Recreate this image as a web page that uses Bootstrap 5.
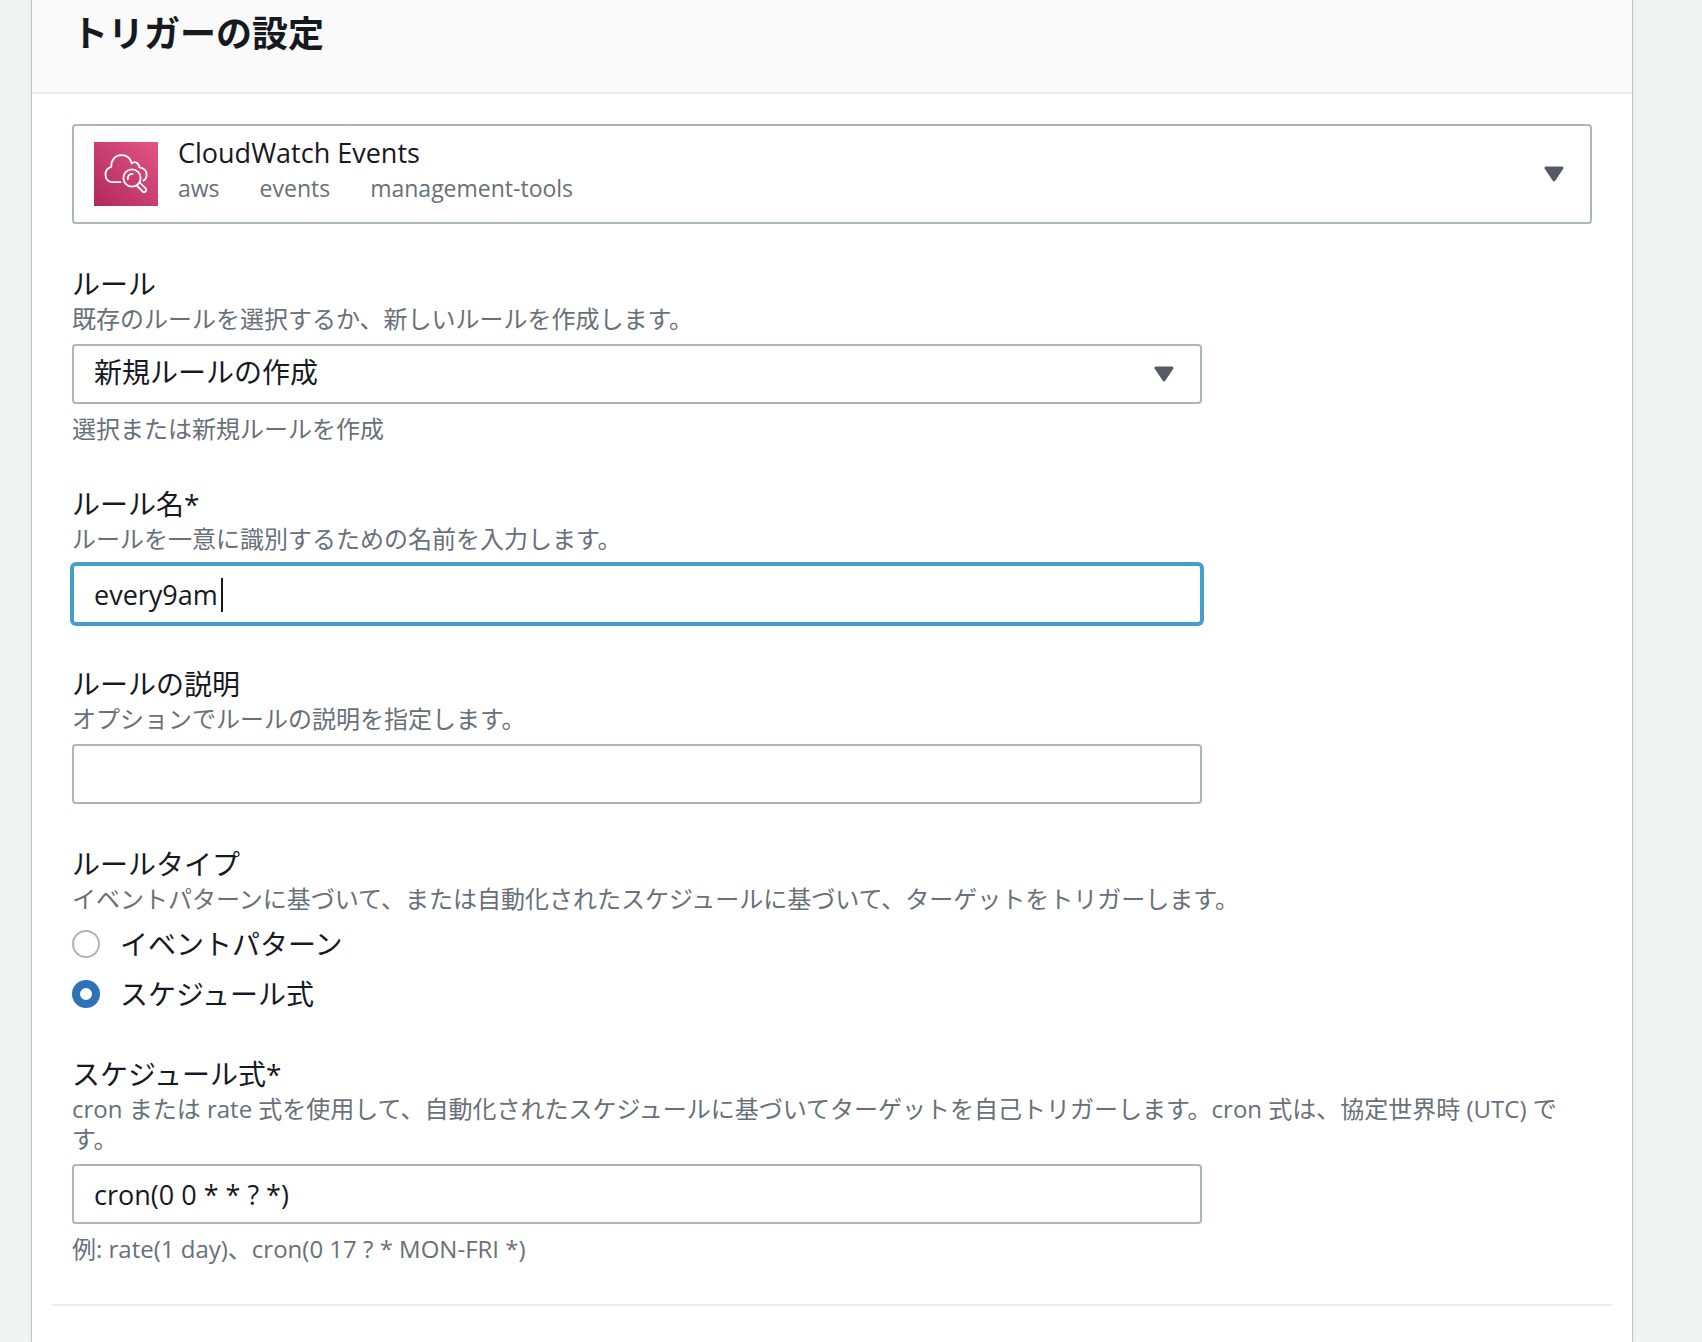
<!DOCTYPE html>
<html lang="ja">
<head>
<meta charset="utf-8">
<meta name="viewport" content="width=device-width, initial-scale=1">
<title>トリガーの設定</title>
<link href="https://cdn.jsdelivr.net/npm/bootstrap@5.3.0/dist/css/bootstrap.min.css" rel="stylesheet">
<style>
  body {
    background: #f2f4f4;
    color: #16191f;
    font-family: "Open Sans", "Noto Sans CJK JP", sans-serif;
    font-size: 28px;
    line-height: 40px;
  }
  .page-gutter { padding: 0 70px 0 32px; }
  .trigger-panel {
    border: 0;
    border-radius: 0;
    color: inherit;
    box-shadow: 0 0 0 1px #c3c8cb, 0 0 3px 1px #d5d9db;
  }
  .trigger-header {
    background: #fafafa;
    border-bottom: 2px solid #eaeded;
    border-radius: 0 !important;
    padding: 12px 40px 36px;
  }
  .trigger-header h2 { font-size: 36px; line-height: 44px; }
  .trigger-body { padding: 30px 40px 0; }
  .source-select {
    background: #fff;
    border: 2px solid #aab7b8;
    border-radius: 4px;
    color: inherit;
    min-height: 100px;
    padding: 8px 26px 8px 20px;
  }
  .source-icon { width: 64px; height: 64px; }
  .source-name { font-size: 27px; font-weight: 500; line-height: 36px; }
  .source-tags { font-size: 23px; font-weight: 500; line-height: 34px; gap: 40px; color: #687078; }
  .field-group { margin-top: 40px; }
  .field-row { --bs-gutter-x: 40px; }
  .field-label { display: block; font-size: 28px; line-height: 40px; margin: 0; font-weight: 400; }
  .field-note { color: #687078; font-size: 24px; line-height: 30px; margin: 0; }
  .field-box.form-control, .field-box.form-select {
    border: 2px solid #aab7b8;
    border-radius: 4px;
    color: #16191f;
    font-size: 28px;
    height: 60px;
    line-height: 40px;
    margin: 10px 0;
    padding: 8px 20px;
  }
  .field-box.form-select { padding: 6px 20px 10px; }
  .field-box.form-control { font-size: 27px; font-weight: 500; }
  .field-box.form-select {
    background-image: url("data:image/svg+xml,%3Csvg xmlns='http://www.w3.org/2000/svg' viewBox='0 0 20 16'%3E%3Cpath d='M2 2h16l-8 12z' fill='%23545b64' stroke='%23545b64' stroke-width='3' stroke-linejoin='round'/%3E%3C/svg%3E");
    background-position: right 26px center;
    background-size: 20px 16px;
  }
  .field-box.is-active { border-color: #44a0c8; box-shadow: 0 0 0 2px #44a0c8; }
  .text-caret { position: absolute; left: 149px; top: 14px; width: 2px; height: 34px; background: #16191f; }
  .radio-list { padding-top: 10px; gap: 10px; }
  .radio-line { gap: 20px; min-height: 40px; }
  .radio-line .form-check-input {
    width: 28px; height: 28px; margin: 0; border: 2px solid #aab7b8; flex: none;
  }
  .radio-line .form-check-input:checked {
    background: #fff; border: 8px solid #2e73b8;
  }
  .section-rule { border: 0; border-top: 2px solid #eaeded; opacity: 1; margin: 40px -20px 36px; }
</style>
</head>
<body>
<main class="page-gutter">
  <section class="card trigger-panel min-vh-100">
    <header class="card-header trigger-header"><h2 class="fw-bold m-0">トリガーの設定</h2></header>
    <form class="card-body trigger-body">
      <button type="button" class="source-select d-flex align-items-center w-100 text-start" aria-haspopup="listbox">
        <svg class="source-icon flex-shrink-0" viewBox="0 0 64 64" aria-hidden="true">
          <defs><linearGradient id="rose" x1="0" y1="1" x2="1" y2="0"><stop stop-color="#b0295a"/><stop offset="1" stop-color="#e35585"/></linearGradient></defs>
          <path fill="url(#rose)" d="M0 0h64v64H0z"/>
          <g fill="none" stroke="#fff" stroke-width="1.8" stroke-linecap="round" stroke-linejoin="round">
            <path d="M26.500 40.200H17.500C13.500 39.500 11.500 36.500 11.500 32.500C11.500 28.500 13.800 25.800 17.300 24.800C16.800 18.500 21 13.200 27.500 13.200C32.600 13.200 36.500 16.500 37.800 21.500C39.500 19.300 44.500 19.300 45.400 25.300C50 26 52.600 28.500 52.600 32.600C52.600 35.500 51.300 37.600 49.400 38.600"/>
            <circle cx="38" cy="36" r="8.600"/>
            <path d="M33.800 37.300C33.300 34 35.400 31.700 38.500 31.900"/>
            <path d="M42.800 43.500L48.800 49.700C51 51.300 53.300 48.300 51.900 46.700L45.500 40.400"/>
          </g>
        </svg>
        <span class="flex-grow-1 ps-3 ms-1 pb-2">
          <span class="source-name d-block">CloudWatch Events</span>
          <span class="source-tags d-flex"><span>aws</span><span>events</span><span>management-tools</span></span>
        </span>
        <svg width="20" height="16" viewBox="0 0 20 16" aria-hidden="true"><path d="M2 2h16l-8 12z" fill="#545b64" stroke="#545b64" stroke-width="3" stroke-linejoin="round"/></svg>
      </button>

      <div class="field-group">
        <label class="field-label" for="rule">ルール</label>
        <p class="field-note">既存のルールを選択するか、新しいルールを作成します。</p>
        <div class="row field-row"><div class="col-9">
          <select class="form-select field-box" id="rule"><option>新規ルールの作成</option></select>
        </div></div>
        <p class="field-note">選択または新規ルールを作成</p>
      </div>

      <div class="field-group">
        <label class="field-label" for="ruleName">ルール名*</label>
        <p class="field-note">ルールを一意に識別するための名前を入力します。</p>
        <div class="row field-row mt-0"><div class="col-9"><div class="position-relative pt-0 d-flow-root">
          <input class="form-control field-box is-active mb-0" id="ruleName" type="text" value="every9am">
          <span class="text-caret" aria-hidden="true"></span>
        </div></div></div>
      </div>

      <div class="field-group">
        <label class="field-label" for="ruleText">ルールの説明</label>
        <p class="field-note">オプションでルールの説明を指定します。</p>
        <div class="row field-row"><div class="col-9">
          <input class="form-control field-box mb-0" id="ruleText" type="text">
        </div></div>
      </div>

      <fieldset class="field-group">
        <legend class="field-label">ルールタイプ</legend>
        <p class="field-note">イベントパターンに基づいて、または自動化されたスケジュールに基づいて、ターゲットをトリガーします。</p>
        <div class="radio-list d-flex flex-column">
          <div class="radio-line d-flex align-items-center">
            <input class="form-check-input" type="radio" name="ruleType" id="typePattern">
            <label for="typePattern">イベントパターン</label>
          </div>
          <div class="radio-line d-flex align-items-center">
            <input class="form-check-input" type="radio" name="ruleType" id="typeSchedule" checked>
            <label for="typeSchedule">スケジュール式</label>
          </div>
        </div>
      </fieldset>

      <div class="field-group">
        <label class="field-label" for="schedule">スケジュール式*</label>
        <p class="field-note">cron または rate 式を使用して、自動化されたスケジュールに基づいてターゲットを自己トリガーします。cron 式は、協定世界時 (UTC) です。</p>
        <div class="row field-row"><div class="col-9">
          <input class="form-control field-box" id="schedule" type="text" value="cron(0 0 * * ? *)">
        </div></div>
        <p class="field-note">例: rate(1 day)、cron(0 17 ? * MON-FRI *)</p>
      </div>

      <hr class="section-rule">
    </form>
  </section>
</main>
<script src="https://cdn.jsdelivr.net/npm/bootstrap@5.3.0/dist/js/bootstrap.bundle.min.js"></script>
</body>
</html>
